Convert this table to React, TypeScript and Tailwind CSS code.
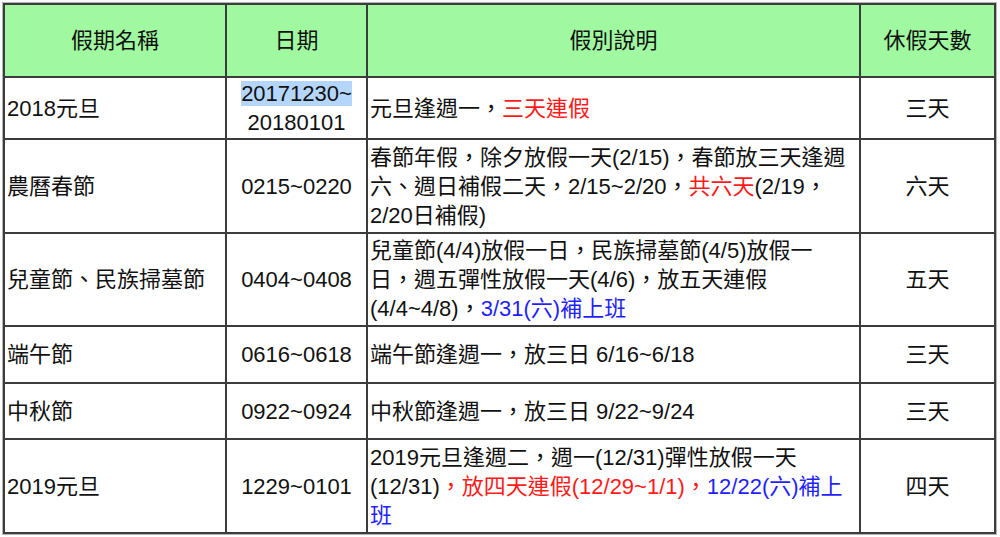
import React from 'react'

const cell = 'border-2 border-[#3c3c3c] px-[2px] align-middle'

const Red = ({ children }: { children: React.ReactNode }) => (
  <span className="text-[#ff1a1a]">{children}</span>
)
const Blue = ({ children }: { children: React.ReactNode }) => (
  <span className="text-[#1f1fff]">{children}</span>
)

export default function App () {
  return (
    <div className="bg-white w-[1000px] h-[537px] p-[3px] font-['Liberation_Sans','Noto_Sans_CJK_TC',sans-serif] text-[22px] leading-[29px] text-[#111]">
      <table className="table-fixed border-collapse w-[991px] shadow-[0_0_0_1px_#b5b5b5]">
        <colgroup>
          <col className="w-[222px]" />
          <col className="w-[141px]" />
          <col className="w-[493px]" />
          <col className="w-[135px]" />
        </colgroup>
        <thead>
          <tr className="h-[73px] bg-[#a0f9a0]">
            <th className={`${cell} font-normal text-center`}>假期名稱</th>
            <th className={`${cell} font-normal text-center`}>日期</th>
            <th className={`${cell} font-normal text-center`}>假別說明</th>
            <th className={`${cell} font-normal text-center`}>休假天數</th>
          </tr>
        </thead>
        <tbody>
          <tr className="h-[62px]">
            <td className={cell}>2018元旦</td>
            <td className={`${cell} text-center`}>
              <span className="bg-[#b4d6fc]">20171230~</span>
              <br />
              20180101
            </td>
            <td className={cell}>元旦逢週一，<Red>三天連假</Red></td>
            <td className={`${cell} text-center`}>三天</td>
          </tr>
          <tr className="h-[94px]">
            <td className={cell}>農曆春節</td>
            <td className={`${cell} text-center`}>0215~0220</td>
            <td className={cell}>
              春節年假，除夕放假一天(2/15)，春節放三天逢週<br />
              六、週日補假二天，2/15~2/20，<Red>共六天</Red>(2/19，<br />
              2/20日補假)
            </td>
            <td className={`${cell} text-center`}>六天</td>
          </tr>
          <tr className="h-[93px]">
            <td className={cell}>兒童節、民族掃墓節</td>
            <td className={`${cell} text-center`}>0404~0408</td>
            <td className={cell}>
              兒童節(4/4)放假一日，民族掃墓節(4/5)放假一<br />
              日，週五彈性放假一天(4/6)，放五天連假<br />
              (4/4~4/8)，<Blue>3/31(六)補上班</Blue>
            </td>
            <td className={`${cell} text-center`}>五天</td>
          </tr>
          <tr className="h-[57px]">
            <td className={cell}>端午節</td>
            <td className={`${cell} text-center`}>0616~0618</td>
            <td className={cell}>端午節逢週一，放三日 6/16~6/18</td>
            <td className={`${cell} text-center`}>三天</td>
          </tr>
          <tr className="h-[56px]">
            <td className={cell}>中秋節</td>
            <td className={`${cell} text-center`}>0922~0924</td>
            <td className={cell}>中秋節逢週一，放三日 9/22~9/24</td>
            <td className={`${cell} text-center`}>三天</td>
          </tr>
          <tr className="h-[94px]">
            <td className={cell}>2019元旦</td>
            <td className={`${cell} text-center`}>1229~0101</td>
            <td className={cell}>
              2019元旦逢週二，週一(12/31)彈性放假一天<br />
              (12/31)<Red>，放四天連假(12/29~1/1)，</Red><Blue>12/22(六)補上<br />
              班</Blue>
            </td>
            <td className={`${cell} text-center`}>四天</td>
          </tr>
        </tbody>
      </table>
    </div>
  )
}
